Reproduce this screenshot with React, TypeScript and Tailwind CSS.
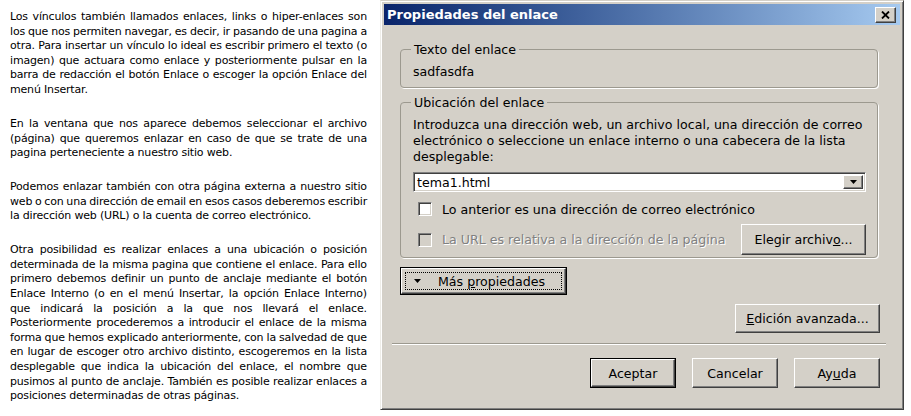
import React from "react";

const paragraphs: string[][] = [
  [
    "Los vínculos también llamados enlaces, links o hiper-enlaces son",
    "los que nos permiten navegar, es decir, ir pasando de una pagina a",
    "otra. Para insertar un vínculo lo ideal es escribir primero el texto (o",
    "imagen) que actuara como enlace y posteriormente pulsar en la",
    "barra de redacción el botón Enlace o escoger la opción Enlace del",
    "menú Insertar.",
  ],
  [
    "En la ventana que nos aparece debemos seleccionar el archivo",
    "(página) que queremos enlazar en caso de que se trate de una",
    "pagina perteneciente a nuestro sitio web.",
  ],
  [
    "Podemos enlazar también con otra página externa a nuestro sitio",
    "web o con una dirección de email en esos casos deberemos escribir",
    "la dirección web (URL) o la cuenta de correo electrónico.",
  ],
  [
    "Otra posibilidad es realizar enlaces a una ubicación o posición",
    "determinada de la misma pagina que contiene el enlace. Para ello",
    "primero debemos definir un punto de anclaje mediante el botón",
    "Enlace Interno (o en el menú Insertar, la opción Enlace Interno)",
    "que indicará la posición a la que nos llevará el enlace.",
    "Posteriormente procederemos a introducir el enlace de la misma",
    "forma que hemos explicado anteriormente, con la salvedad de que",
    "en lugar de escoger otro archivo distinto, escogeremos en la lista",
    "desplegable que indica la ubicación del enlace, el nombre que",
    "pusimos al punto de anclaje. También es posible realizar enlaces a",
    "posiciones determinadas de otras páginas.",
  ],
];

function Para({ lines }: { lines: string[] }) {
  return (
    <div className="mb-[19.4px]">
      {lines.map((line, i) =>
        i < lines.length - 1 ? (
          <div key={i} className="flex justify-between gap-[2px] whitespace-nowrap">
            {line.split(" ").map((w, j) => (
              <span key={j}>{w}</span>
            ))}
          </div>
        ) : (
          <div key={i} className="whitespace-nowrap">
            {line}
          </div>
        )
      )}
    </div>
  );
}

// classic win32 raised face
const raised =
  "bg-[#d4d0c8] border border-t-white border-l-white border-r-[#404040] border-b-[#404040] shadow-[inset_-1px_-1px_0_#808080]";

function Btn({
  children,
  className = "",
  def = false,
  focus = false,
  left = false,
}: {
  children: React.ReactNode;
  className?: string;
  def?: boolean;
  focus?: boolean;
  left?: boolean;
}) {
  const content = focus ? (
    <div className={`flex-1 self-stretch m-[3px] border border-dotted border-black flex items-center ${left ? "justify-start" : "justify-center"}`}>
      {children}
    </div>
  ) : (
    children
  );
  const face = (
    <div className={`${raised} flex-1 self-stretch flex items-center ${left ? "justify-start" : "justify-center"}`}>
      {content}
    </div>
  );
  return (
    <div className={`flex ${def ? "border border-black" : ""} ${className}`}>{face}</div>
  );
}

function Check({ disabled = false }: { disabled?: boolean }) {
  return (
    <div
      className={`w-[14px] h-[14px] shrink-0 border border-t-[#808080] border-l-[#808080] border-r-white border-b-white shadow-[inset_1px_1px_0_#404040,inset_-1px_-1px_0_#d4d0c8] ${
        disabled ? "bg-[#d4d0c8]" : "bg-white"
      }`}
    />
  );
}

function DownTri() {
  return (
    <svg width="7" height="4" viewBox="0 0 7 4">
      <path d="M0 0h7L3.5 4z" fill="#000" />
    </svg>
  );
}

export default function App() {
  return (
    <div className="flex w-[911px] h-[416px] bg-white overflow-hidden">
      <div className="w-[380px] shrink-0 pl-[10px] pr-[13px] pt-[10px] font-['DejaVu_Sans',Verdana,sans-serif] text-[11px] tracking-[-0.18px] leading-[14.6px] text-black">
        {paragraphs.map((p, i) => (
          <Para key={i} lines={p} />
        ))}
      </div>

      <div className="w-[524px] h-[410px] shrink-0 flex flex-col bg-[#d4d0c8] border border-t-[#d4d0c8] border-l-[#eeede8] border-r-[#404040] border-b-[#404040] shadow-[inset_1px_1px_0_#fff,inset_-1px_-1px_0_#808080] p-[3px] font-['DejaVu_Sans',Tahoma,sans-serif] text-[12.6px] text-black">
        {/* title bar */}
        <div className="h-[21px] flex items-center justify-between bg-linear-to-r from-[#0a246a] to-[#a6caf0] pl-[3px] pr-[4px]">
          <span className="font-bold text-white text-[13px]">Propiedades del enlace</span>
          <div className={`${raised} w-[21px] h-[16px] flex items-center justify-center`}>
            <svg width="9" height="8" viewBox="0 0 9 8">
              <path d="M1 0.5L8 7.5M8 0.5L1 7.5" stroke="#000" strokeWidth="1.8" />
            </svg>
          </div>
        </div>

        {/* body */}
        <div className="flex flex-col pl-[16px] pr-[20px] pt-[17px] leading-[15px]">
          <fieldset className="mr-[2px] border border-[#9c998f] rounded-[4px] pl-[12px] pr-[11px] pt-[7px] pb-[8px] shadow-[1px_1px_0_#fff]">
            <legend className="px-[3px] -ml-[2px]">Texto del enlace</legend>
            <div>sadfasdfa</div>
          </fieldset>

          <fieldset className="mt-[7px] mr-[2px] border border-[#9c998f] rounded-[4px] pl-[12px] pr-[11px] pt-[7px] pb-[2px] shadow-[1px_1px_0_#fff]">
            <legend className="px-[3px] -ml-[2px]">Ubicación del enlace</legend>
            <div className="leading-[16px] whitespace-nowrap">
              <div>Introduzca una dirección web, un archivo local, una dirección de correo</div>
              <div>electrónico o seleccione un enlace interno o una cabecera de la lista</div>
              <div>desplegable:</div>
            </div>
            <div className="mt-[7px] h-[20px] flex items-center bg-white border border-t-[#808080] border-l-[#808080] border-r-white border-b-white shadow-[inset_1px_1px_0_#404040,inset_-1px_-1px_0_#d4d0c8] p-[2px]">
              <span className="flex-1 pl-[1px]">tema1.html</span>
              <div className={`${raised} w-[20px] self-stretch flex items-center justify-center`}>
                <DownTri />
              </div>
            </div>
            <div className="mt-[9px] h-[16px] flex items-center gap-[10px] pl-[5px]">
              <Check />
              <span>Lo anterior es una dirección de correo electrónico</span>
            </div>
            <div className="mt-[7px] flex items-center pl-[5px]">
              <Check disabled />
              <span className="ml-[10px] text-[#808080] [text-shadow:1px_1px_0_#fff]">
                La URL es relativa a la dirección de la página
              </span>
              <Btn className="ml-auto w-[125px] h-[31px]">
                <span>
                  Elegir archiv<span className="underline">o</span>...
                </span>
              </Btn>
            </div>
          </fieldset>

          <Btn def focus left className="mt-[9px] w-[167px] h-[28px]">
            <span className="pl-[8px] flex items-center">
              <DownTri />
              <span className="ml-[17px]">
                Más <span className="underline">p</span>ropiedades
              </span>
            </span>
          </Btn>

          <Btn className="self-end mt-[9px] w-[145px] h-[29px]">
            <span>
              <span className="underline">E</span>dición avanzada...
            </span>
          </Btn>

          <div className="mt-[10px] -ml-[8px] -mr-[6px] h-[2px] border-t border-t-[#9c998f] border-b border-b-white" />

          <div className="mt-[13px] flex justify-end gap-[16px]">
            <Btn def className="w-[86px] h-[30px]">
              <span>Aceptar</span>
            </Btn>
            <Btn className="w-[86px] h-[30px]">
              <span>Cancelar</span>
            </Btn>
            <Btn className="w-[86px] h-[30px]">
              <span>
                Ay<span className="underline">u</span>da
              </span>
            </Btn>
          </div>
        </div>
      </div>
    </div>
  );
}
